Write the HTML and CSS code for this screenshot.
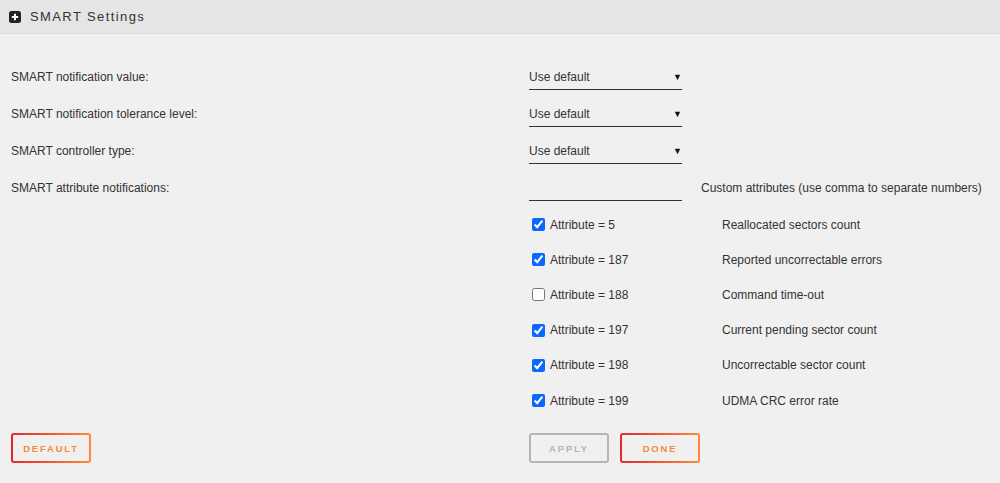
FILE: index.html
```html
<!DOCTYPE html>
<html lang="en">
<head>
  <meta charset="UTF-8">
  <title>SMART Settings</title>
  <link rel="stylesheet" href="styles.css">
</head>
<body>
  <div class="header">
    <svg class="plus" width="12" height="12" viewBox="0 0 12 12">
      <rect width="12" height="12" rx="2.5" fill="#222"/>
      <path d="M6 2.8v6.4M2.8 6h6.4" stroke="#fff" stroke-width="2"/>
    </svg>
    <span class="title">SMART Settings</span>
  </div>

  <div class="content">
    <div class="row">
      <label class="name">SMART notification value:</label>
      <div class="select"><span>Use default</span><span class="arrow">&#9660;</span></div>
    </div>
    <div class="row">
      <label class="name">SMART notification tolerance level:</label>
      <div class="select"><span>Use default</span><span class="arrow">&#9660;</span></div>
    </div>
    <div class="row">
      <label class="name">SMART controller type:</label>
      <div class="select"><span>Use default</span><span class="arrow">&#9660;</span></div>
    </div>
    <div class="row">
      <label class="name">SMART attribute notifications:</label>
      <input class="text" type="text">
      <span class="hint">Custom attributes (use comma to separate numbers)</span>
    </div>

    <div class="attrs">
      <div class="attr"><label class="check"><input type="checkbox" checked> Attribute = 5</label><span>Reallocated sectors count</span></div>
      <div class="attr"><label class="check"><input type="checkbox" checked> Attribute = 187</label><span>Reported uncorrectable errors</span></div>
      <div class="attr"><label class="check"><input type="checkbox"> Attribute = 188</label><span>Command time-out</span></div>
      <div class="attr"><label class="check"><input type="checkbox" checked> Attribute = 197</label><span>Current pending sector count</span></div>
      <div class="attr"><label class="check"><input type="checkbox" checked> Attribute = 198</label><span>Uncorrectable sector count</span></div>
      <div class="attr"><label class="check"><input type="checkbox" checked> Attribute = 199</label><span>UDMA CRC error rate</span></div>
    </div>

    <div class="buttons">
      <div class="name"><button class="btn">DEFAULT</button></div>
      <button class="btn off" disabled>APPLY</button>
      <button class="btn">DONE</button>
    </div>
  </div>
</body>
</html>
```

FILE: styles.css
```css
body {
  margin: 0;
  background: #f0f0f0;
  font-family: "Liberation Sans", Arial, sans-serif;
  font-size: 12px;
  color: #333;
}
.header {
  height: 34px;
  box-sizing: border-box;
  background: #e5e5e5;
  border-bottom: 1px solid #dcdcdc;
  display: flex;
  align-items: center;
  padding-left: 9px;
}
.plus {
  margin-right: 9px;
  margin-top: 1px;
}
.title {
  font-size: 13px;
  letter-spacing: 1.4px;
  color: #333;
}
.content {
  padding: 24px 0 0 11px;
}
.row {
  display: flex;
  align-items: center;
  height: 37px;
}
.name {
  width: 518px;
  flex-shrink: 0;
}
.select {
  width: 153px;
  height: 26px;
  box-sizing: border-box;
  border-bottom: 1px solid #333;
  display: flex;
  align-items: center;
  justify-content: space-between;
  margin-top: 1px;
}
.arrow {
  font-size: 9px;
  margin-right: 0;
  color: #111;
}
.text {
  width: 153px;
  height: 26px;
  box-sizing: border-box;
  border: none;
  border-bottom: 1px solid #333;
  background: transparent;
  margin: 1px 0 0;
  padding: 0;
}
.hint {
  margin-left: 19px;
}
.attrs {
  padding: 1px 0 0 518px;
}
.attr {
  display: flex;
  align-items: center;
  height: 35.2px;
}
.check {
  width: 193px;
  display: flex;
  align-items: center;
}
.check input {
  width: 13px;
  height: 13px;
  margin: 0 5px 0 3px;
  accent-color: #0b67ff;
}
.buttons {
  display: flex;
  align-items: center;
  margin-top: 15px;
}
.btn {
  width: 80px;
  height: 30px;
  border: 2px solid transparent;
  border-radius: 3px;
  background: linear-gradient(#f0f0f0, #f0f0f0) padding-box,
              linear-gradient(90deg, #e5262a, #ff8a36) border-box;
  color: #f7893b;
  font-family: "Liberation Sans", Arial, sans-serif;
  font-size: 9.5px;
  font-weight: bold;
  letter-spacing: 1.8px;
  padding: 0;
  margin-right: 11px;
}
.buttons .name .btn {
  margin: 0;
}
.btn.off {
  background: #f0f0f0;
  border-color: #b5b5b5;
  color: #b5b5b5;
}
```
